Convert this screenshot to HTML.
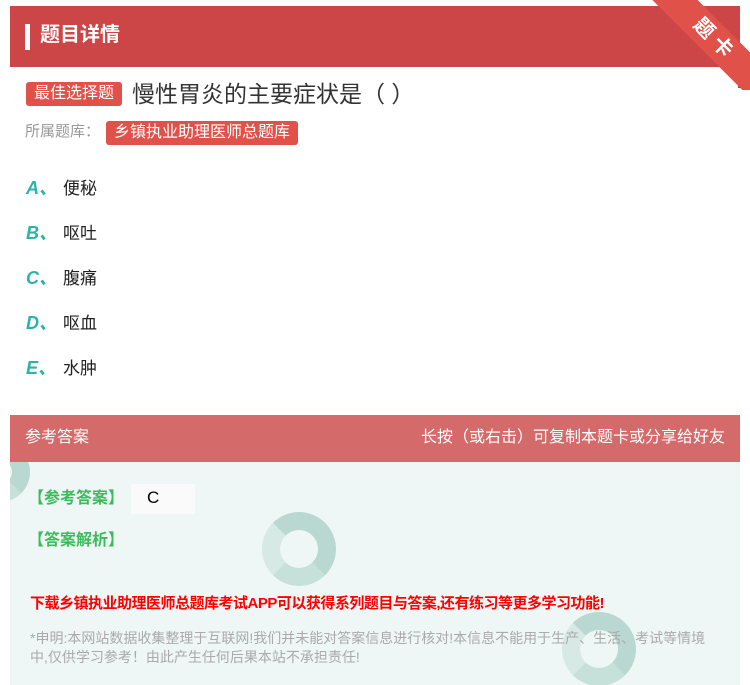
<!DOCTYPE html>
<html><head><meta charset="utf-8"><style>
*{margin:0;padding:0;box-sizing:border-box}
body{width:750px;height:685px;background:#fff;position:relative;overflow:hidden;font-family:"Liberation Sans","Noto Sans CJK SC",sans-serif}
.hdr{position:absolute;left:10px;top:6px;width:730px;height:61px;background:#cc4547}
.hdr .bar{position:absolute;left:15px;top:18px;width:5px;height:26px;background:#fff}
.hdr .t{position:absolute;left:30px;top:15px;color:#fff;font-size:20px;font-weight:bold;line-height:28px}
.rib{position:absolute;left:0;top:0;width:750px;height:90px;overflow:hidden}
.fold{position:absolute;left:738px;top:60px;width:12px;height:28px;background:#b83a3a;border-radius:0 0 6px 0}
.band{position:absolute;width:150px;height:32px;background:#e0514a;transform:rotate(45deg);color:#fff;font-size:20px;line-height:32px;text-align:center;font-weight:bold;letter-spacing:6px;left:640px;top:24px}
.tag{position:absolute;background:#e0514a;color:#fff;border-radius:3px;font-size:16px;line-height:24px;padding:0 8px}
.q{position:absolute;left:132px;top:78px;font-size:23px;color:#333;line-height:32px}
.lib{position:absolute;left:25px;top:120px;font-size:15px;color:#999;line-height:24px}
.opt{position:absolute;left:26px;font-size:17px;color:#222;line-height:24px}
.opt b{color:#2bb3a8;font-style:italic;font-size:18px;display:inline-block;width:37px}
.ah{position:absolute;left:10px;top:415px;width:730px;height:47px;background:#d46a6a;color:#fff;font-size:16px;line-height:45px}
.ab{position:absolute;left:10px;top:462px;width:730px;height:223px;background:#eef7f5;overflow:hidden}
.g{color:#3dbb5c;font-size:16px;font-weight:bold;position:absolute;left:18px}
.swirl{position:absolute;border-radius:50%;border:18px solid #b9d8d1;border-left-color:#d6e9e5;border-bottom-color:#c6e0da}
</style></head><body>
<div class="hdr"><div class="bar"></div><div class="t">题目详情</div></div>
<div class="rib"><div class="fold"></div><div class="band">题卡</div></div>
<div class="tag" style="left:26px;top:82px">最佳选择题</div>
<div class="q">慢性胃炎的主要症状是（ ）</div>
<div class="lib">所属题库：</div>
<div class="tag" style="left:106px;top:121px">乡镇执业助理医师总题库</div>
<div class="opt" style="top:176px"><b>A、</b>便秘</div>
<div class="opt" style="top:221px"><b>B、</b>呕吐</div>
<div class="opt" style="top:266px"><b>C、</b>腹痛</div>
<div class="opt" style="top:311px"><b>D、</b>呕血</div>
<div class="opt" style="top:356px"><b>E、</b>水肿</div>
<div class="ah"><span style="position:absolute;left:15px">参考答案</span><span style="position:absolute;right:15px">长按（或右击）可复制本题卡或分享给好友</span></div>
<div class="ab">
<div class="swirl" style="left:252px;top:50px;width:74px;height:74px"></div>
<div class="swirl" style="left:552px;top:150px;width:74px;height:74px"></div>
<div class="swirl" style="left:-40px;top:-20px;width:60px;height:60px"></div>
<div class="g" style="top:22px">【参考答案】</div>
<div style="position:absolute;left:121px;top:22px;width:64px;height:30px;background:#fafafa;font-size:17px;line-height:28px;padding-left:16px">C</div>
<div class="g" style="top:64px">【答案解析】</div>
<div style="position:absolute;left:20px;top:130px;color:#f00;font-size:15px;font-weight:bold;letter-spacing:-0.5px">下载乡镇执业助理医师总题库考试APP可以获得系列题目与答案,还有练习等更多学习功能!</div>
<div style="position:absolute;left:20px;top:167px;width:690px;color:#aaa;font-size:14px;line-height:19px">*申明:本网站数据收集整理于互联网!我们并未能对答案信息进行核对!本信息不能用于生产、生活、考试等情境中,仅供学习参考！由此产生任何后果本站不承担责任!</div>
</div>
</body></html>
